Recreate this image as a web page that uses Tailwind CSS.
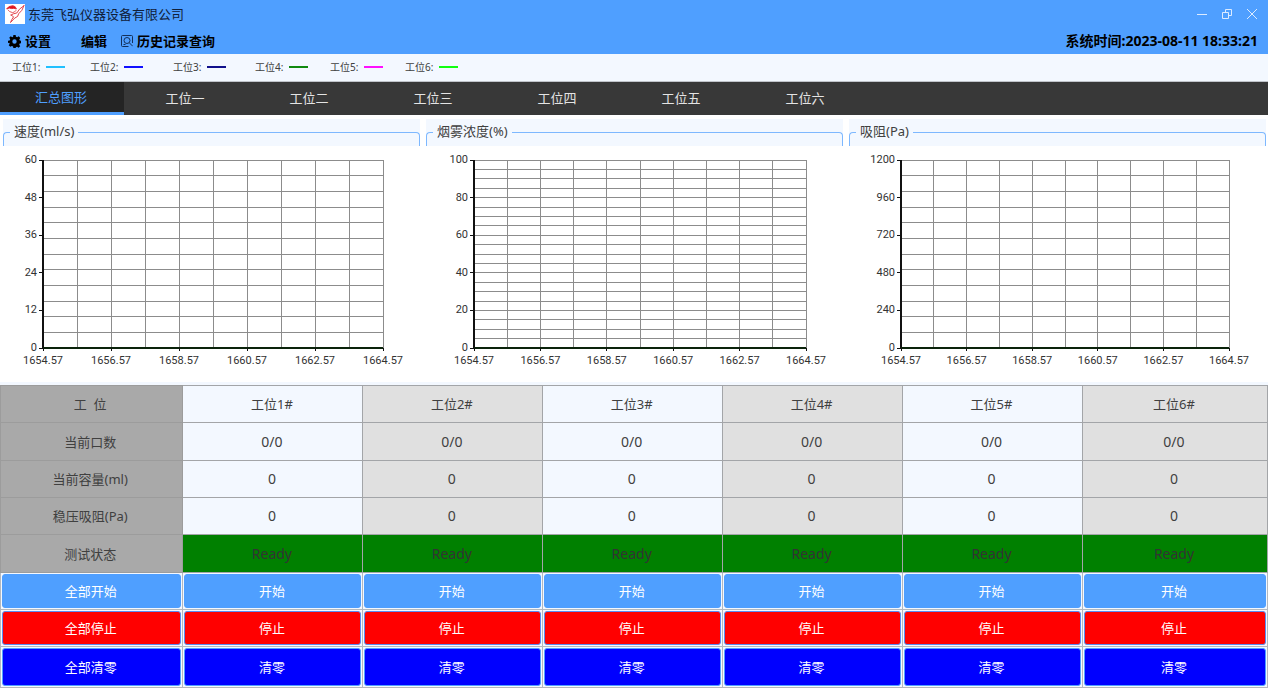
<!DOCTYPE html>
<html lang="zh-CN">
<head>
    <meta charset="UTF-8">
    <meta name="viewport" content="width=device-width, initial-scale=1.0">
    <title>东莞飞弘仪器设备有限公司</title>
    <script src="https://cdn.jsdelivr.net/npm/@tailwindcss/browser@4"></script>
</head>
<body class="min-h-screen flex flex-col bg-white font-['Noto_Sans','Noto_Sans_CJK_SC',sans-serif] text-[13px] leading-5 text-[#404040]">
    <!-- Title bar and menu -->
    <header class="bg-[#4f9fff] text-black">
        <div class="flex items-center h-7 pl-[5px] pr-2">
            <svg class="w-5 h-5 bg-white mr-[3px]" viewBox="0 0 20 20" fill="none" stroke="#e0303a" stroke-linecap="round">
                <path d="M2 4.600 Q3.500 1.600 8 1.800 Q10.600 2 11.400 5 Q8.600 3.800 6.800 4.600 Q4.400 3.600 2 4.600z" fill="#e0101c" />
                <path d="M3 6 Q4 8 7.500 8.600 Q9.500 8.600 11 6.500" stroke-width=".8" />
                <path d="M19 1.600 Q13.500 5 11.800 9 Q8 9.500 6 11 M19 1.600 Q17.500 7 13.600 9.800 Q13.500 13 9.800 14 L5.500 18.500 Q6.500 15.500 8.600 12.800 L6 11" stroke-width=".9" />
            </svg>
            <h1 class="flex-1 text-[#10203a]">东莞飞弘仪器设备有限公司</h1>
            <div class="flex items-center gap-[9px] text-[#dcebff]">
                <button type="button" aria-label="最小化" class="w-4 h-5 flex items-center justify-center">
                    <svg class="w-3 h-3" viewBox="0 0 12 12" fill="none" stroke="currentColor"><path d="M1 6.5h10" /></svg>
                </button>
                <button type="button" aria-label="还原" class="w-4 h-5 flex items-center justify-center">
                    <svg class="w-3 h-3" viewBox="0 0 12 12" fill="none" stroke="currentColor"><path d="M1.5 4.5h6v6h-6zM4.5 4.5v-3h6v6h-3" /></svg>
                </button>
                <button type="button" aria-label="关闭" class="w-4 h-5 flex items-center justify-center">
                    <svg class="w-3 h-3" viewBox="0 0 12 12" fill="none" stroke="currentColor"><path d="M1 1l10 10M11 1L1 11" /></svg>
                </button>
            </div>
        </div>
        <div class="flex items-center h-[26px] px-2 font-bold">
            <button type="button" class="flex items-center gap-1">
                <svg class="w-[13px] h-[13px]" viewBox="0 0 16 16">
                    <path fill="currentColor" fill-rule="evenodd" d="M6.6 0h2.8l.4 2.2 1.500.7 1.900-1.300 1.900 2-1.200 1.800.6 1.400 2 .4v2.900l-2.100.4-.6 1.400 1.200 1.900-2 1.900-1.800-1.200-1.400.6L9.400 16H6.600l-.4-2-1.500-.6-1.800 1.200-2-1.900 1.200-1.900-.6-1.400L0 9.900V7.100l2.100-.4.6-1.400L1.500 3.500l1.900-1.900 1.800 1.300 1.100-.6zM8 5.300a2.700 2.700 0 1 0 0 5.400 2.700 2.700 0 0 0 0-5.400z" />
                </svg>
                设置
            </button>
            <button type="button" class="ml-[30px]">编辑</button>
            <button type="button" class="flex items-center gap-1 ml-[14px]">
                <svg class="w-3 h-3" viewBox="0 0 12 12" fill="none" stroke="#14305a">
                    <path d="M7.500 11.500H1.500a1 1 0 0 1-1-1v-9a1 1 0 0 1 1-1h9a1 1 0 0 1 1 1v6.500M2.500 9.500h2" />
                    <circle cx="6" cy="5.500" r="3" />
                    <path d="M8.200 7.700l3.500 3.500" />
                </svg>
                历史记录查询
            </button>
            <p class="ml-auto pr-[2px] text-sm">系统时间:2023-08-11 18:33:21</p>
        </div>
    </header>

    <!-- Line colours -->
    <ul class="flex h-7 pl-3 pb-[2px] bg-[#f3f8ff] border-b border-[#c0c4ca] text-[10px]">
        <li class="flex items-center gap-[6px] w-[78px]">工位1:<span class="w-[19px] h-[2px] bg-[#20c0ff]"></span></li>
        <li class="flex items-center gap-[6px] w-[83px]">工位2:<span class="w-[19px] h-[2px] bg-[#1010ff]"></span></li>
        <li class="flex items-center gap-[6px] w-[82px]">工位3:<span class="w-[19px] h-[2px] bg-[#10108b]"></span></li>
        <li class="flex items-center gap-[6px] w-[75px]">工位4:<span class="w-[19px] h-[2px] bg-[#108a10]"></span></li>
        <li class="flex items-center gap-[6px] w-[75px]">工位5:<span class="w-[19px] h-[2px] bg-[#ff10ff]"></span></li>
        <li class="flex items-center gap-[6px] w-[75px]">工位6:<span class="w-[19px] h-[2px] bg-[#10ff10]"></span></li>
    </ul>

    <!-- Tabs -->
    <nav class="flex h-[33px] bg-[#383838] text-[#e4e4e4]">
        <a href="#all" class="w-[124px] flex items-center justify-center pr-[2px] bg-[#242424] text-[#4f9fff] border-b-3 border-[#4f9fff]">汇总图形</a>
        <a href="#s1" class="w-[124px] flex items-center justify-center pr-[2px] pb-[2px]">工位一</a>
        <a href="#s2" class="w-[124px] flex items-center justify-center pr-[2px] pb-[2px]">工位二</a>
        <a href="#s3" class="w-[124px] flex items-center justify-center pr-[2px] pb-[2px]">工位三</a>
        <a href="#s4" class="w-[124px] flex items-center justify-center pr-[2px] pb-[2px]">工位四</a>
        <a href="#s5" class="w-[124px] flex items-center justify-center pr-[2px] pb-[2px]">工位五</a>
        <a href="#s6" class="w-[124px] flex items-center justify-center pr-[2px] pb-[2px]">工位六</a>
    </nav>

    <!-- Charts -->
    <main class="flex-1 grid grid-cols-3 gap-[6px] pt-1 pl-[3px] pr-[2px] min-h-[220px]">
        <section class="flex flex-col">
            <div class="flex items-end h-[27px] bg-[#f3f8ff]">
                <span class="w-[7px] h-[14px] border-l border-t border-[#7db8ff] rounded-tl-sm"></span>
                <h2 class="self-start pt-[2px] px-1">速度(ml/s)</h2>
                <span class="flex-1 h-[14px] border-r border-t border-[#7db8ff] rounded-tr-sm"></span>
            </div>
            <div class="flex-1 flex pt-[14px] pb-[34px] pl-10 pr-[37px]">
                <svg class="chart flex-1 overflow-visible" data-max="60" data-rows="12"></svg>
            </div>
        </section>
        <section class="flex flex-col">
            <div class="flex items-end h-[27px] bg-[#f3f8ff]">
                <span class="w-[7px] h-[14px] border-l border-t border-[#7db8ff] rounded-tl-sm"></span>
                <h2 class="self-start pt-[2px] px-1">烟雾浓度(%)</h2>
                <span class="flex-1 h-[14px] border-r border-t border-[#7db8ff] rounded-tr-sm"></span>
            </div>
            <div class="flex-1 flex pt-[14px] pb-[34px] pl-12 pr-[37px]">
                <svg class="chart flex-1 overflow-visible" data-max="100" data-rows="20"></svg>
            </div>
        </section>
        <section class="flex flex-col">
            <div class="flex items-end h-[27px] bg-[#f3f8ff]">
                <span class="w-[7px] h-[14px] border-l border-t border-[#7db8ff] rounded-tl-sm"></span>
                <h2 class="self-start pt-[2px] px-1">吸阻(Pa)</h2>
                <span class="flex-1 h-[14px] border-r border-t border-[#7db8ff] rounded-tr-sm"></span>
            </div>
            <div class="flex-1 flex pt-[14px] pb-[34px] pl-[52px] pr-[37px]">
                <svg class="chart flex-1 overflow-visible" data-max="1200" data-rows="12"></svg>
            </div>
        </section>
    </main>

    <!-- Station table -->
    <div class="bg-[#f3f8ff] pt-[3px]">
        <table class="w-full table-fixed border-collapse text-center">
            <colgroup>
                <col class="w-[14.4%]">
                <col class="w-[14.2%]">
                <col class="w-[14.2%]">
                <col class="w-[14.2%]">
                <col class="w-[14.2%]">
                <col class="w-[14.2%]">
                <col>
            </colgroup>
            <tbody id="stations"></tbody>
        </table>
    </div>

    <script>
        // Grid, axes and labels; x and y are percentages so the plot follows its box
        document.querySelectorAll('.chart').forEach(svg => {
            const max = Number(svg.dataset.max);
            const rows = Number(svg.dataset.rows);
            let out = '<g stroke="#8c8c8c" shape-rendering="crispEdges">';
            for (let i = 0; i <= 10; i++) {
                out += `<line x1="${i * 10}%" x2="${i * 10}%" y1="0" y2="100%" />`;
            }
            for (let i = 0; i <= rows; i++) {
                const y = i * 100 / rows;
                out += `<line x1="0" x2="100%" y1="${y}%" y2="${y}%" />`;
            }
            out += '</g><g stroke="#111" shape-rendering="crispEdges">';
            out += '<line x1="0" x2="0" y1="0" y2="100%" stroke-width="2" />';
            out += '<line x1="0" x2="100%" y1="100%" y2="100%" stroke="#0a230a" stroke-width="2" />';
            for (let i = 0; i <= 5; i++) {
                out += `<svg y="${i * 20}%" class="overflow-visible"><line x1="-4" x2="0" y1="0" y2="0" /></svg>`;
                out += `<svg x="${i * 20}%" y="100%" class="overflow-visible"><line x1="0" x2="0" y1="0" y2="3" /></svg>`;
            }
            out += '</g>';
            for (let i = 0; i <= 5; i++) {
                out += `<text x="-6" y="${i * 20}%" dy="3" text-anchor="end">${max - i * max / 5}</text>`;
                out += `<text x="${i * 20}%" y="100%" dy="16" text-anchor="middle">${(1654.57 + i * 2).toFixed(2)}</text>`;
            }
            svg.innerHTML = `<g fill="#333" class="text-[11px] font-[Roboto,sans-serif]">${out}</g>`;
        });

        const stations = [1, 2, 3, 4, 5, 6];
        const dataRows = [
            ['工&nbsp; 位', n => `工位${n}#`],
            ['当前口数', () => '0/0'],
            ['当前容量(ml)', () => '0'],
            ['稳压吸阻(Pa)', () => '0'],
            ['测试状态', () => 'Ready'],
        ];
        const buttonRows = [
            ['全部开始', '开始', 'h-[37px]', 'bg-[#4f9fff] border-[#4f9fff]'],
            ['全部停止', '停止', 'h-[37px]', 'bg-[#ff0000] border-[#5a8cf0]'],
            ['全部清零', '清零', 'h-[41px]', 'bg-[#0000ff] border-[#4f9fff]'],
        ];

        let html = '';
        dataRows.forEach(([label, value], r) => {
            const ready = r === dataRows.length - 1;
            html += `<tr class="${r % 3 === 1 ? 'h-[38px]' : 'h-[37px]'}"><th scope="row" class="pr-[3px] bg-[#a9a9a9] border border-[#9c9c9c] font-normal">${label}</th>`;
            stations.forEach(n => {
                const bg = ready ? 'bg-[#008000] text-[#333333]' : n % 2 ? 'bg-[#f3f8ff]' : 'bg-[#e0e0e0]';
                html += `<td class="pr-[2px] border border-[#a3a5a8] ${bg} ${r ? 'text-sm' : ''}">${value(n)}</td>`;
            });
            html += '</tr>';
        });
        buttonRows.forEach(([all, one, height, colors]) => {
            html += `<tr class="${height}">`;
            [all, ...stations.map(() => one)].forEach(text => {
                html += `<td class="${height} p-px border border-[#b4b8be]"><button type="button" class="block w-full h-full pr-[2px] border rounded-[3px] text-white ${colors}">${text}</button></td>`;
            });
            html += '</tr>';
        });
        document.getElementById('stations').innerHTML = html;
    </script>
</body>
</html>
